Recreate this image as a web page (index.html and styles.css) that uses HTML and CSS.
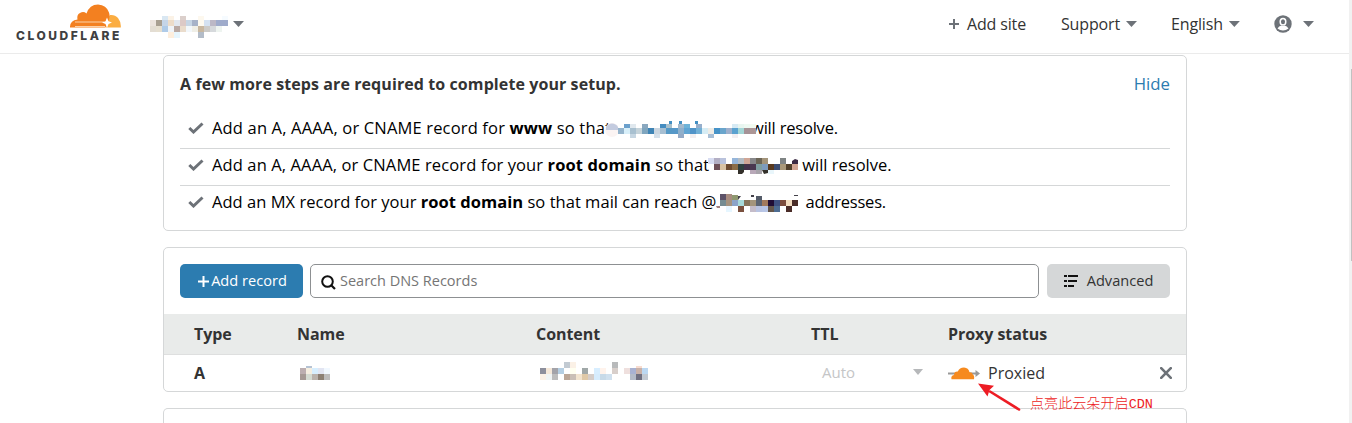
FILE: index.html
```html
<!DOCTYPE html>
<html lang="en">
<head>
<meta charset="utf-8">
<title>DNS | Cloudflare</title>
<link rel="stylesheet" href="styles.css">
</head>
<body>
<header class="topbar">
  <div class="brand">
    <svg class="brand-cloud" width="51" height="24" viewBox="0 0 51 24"><path fill="#fbad41" d="M36 23.500V17L40 11Q45 10.500 48 14Q51.200 18 50.800 23.500Z"/><path fill="#f38020" d="M0 23.500Q-.3 16.700 7.500 15.500Q6.600 10.500 10 9Q13.500 7 16.500 9.500Q19.500 .6 28 .5Q36.500 1 39 8.500Q40.500 13 38 18L35.500 23.500Z"/><path stroke="#fbd2a8" fill="none" d="M5 18H34M5 22.500H35"/><path fill="#fff" d="M37 13.500L38.500 17.200L42 18.500L38.500 20L37 24L35.500 20L32 18.500L35.500 17.200Z"/></svg>
    <span class="brand-name">CLOUDFLARE</span>
  </div>
  <div class="account">
    <svg class="mosaic" width="78" height="22" viewBox="0 0 78 22"><rect x="12" y="-2" fill="#d9e7f2"/><rect x="18" y="-2" fill="#fbf2e6"/><rect x="30" y="-2" fill="#dbcfcb"/><rect x="48" y="-2" fill="#fdf8ee"/><rect x="72" y="-2" fill="#f6fbff"/><rect x="0" y="4" fill="#ece4de"/><rect x="6" y="4" fill="#a89f91"/><rect x="12" y="4" fill="#c5d5e8"/><rect x="18" y="4" fill="#ecdcc9"/><rect x="24" y="4" fill="#e2e7ee"/><rect x="30" y="4" fill="#dcc9c6"/><rect x="36" y="4" fill="#c6d5e4"/><rect x="42" y="4" fill="#a6b2c8"/><rect x="48" y="4" fill="#fdfaf0"/><rect x="54" y="4" fill="#d4e2f2"/><rect x="60" y="4" fill="#bcb8c6"/><rect x="66" y="4" fill="#9fabcb"/><rect x="72" y="4" fill="#9fabcb"/><rect x="0" y="10" fill="#e3ddd3"/><rect x="6" y="10" fill="#e6dfd0"/><rect x="12" y="10" fill="#afcbe8"/><rect x="18" y="10" fill="#f0f4f8"/><rect x="24" y="10" fill="#b9a9a3"/><rect x="30" y="10" fill="#eadccc"/><rect x="36" y="10" fill="#f2f7fb"/><rect x="42" y="10" fill="#efeee6"/><rect x="48" y="10" fill="#c8b79f"/><rect x="54" y="10" fill="#cccbc8"/><rect x="60" y="10" fill="#d6d9dc"/><rect x="66" y="10" fill="#eef4f0"/><rect x="18" y="16" fill="#fdeedd"/><rect x="24" y="16" fill="#e6f5fd"/><rect x="48" y="16" fill="#b3bcc8"/></svg>
    <i class="caret"></i>
  </div>
  <nav class="menu">
    <a class="menu-item add-site"><svg width="10" height="10" viewBox="0 0 10 10"><path d="M5 0V10M0 5H10" stroke="#6d7278" stroke-width="2"/></svg><span>Add site</span></a>
    <a class="menu-item support"><span>Support</span><i class="caret"></i></a>
    <a class="menu-item language"><span>English</span><i class="caret"></i></a>
    <a class="menu-item user"><svg width="18" height="18" viewBox="0 0 18 18"><circle cx="9" cy="9" r="8.700" fill="#6d7278"/><ellipse cx="9" cy="6.700" rx="2.800" ry="3.300" fill="none" stroke="#fff" stroke-width="1.500"/><path d="M3.500 13.500Q5 11 7.300 10.500Q9 11.500 10.700 10.500Q13 11 14.500 13.500Q12 15.500 9 15.500Q6 15.500 3.500 13.500Z" fill="#fff"/></svg><i class="caret"></i></a>
  </nav>
</header>
<div class="scrollbar"><div class="thumb"></div></div>
<main class="content">
  <section class="card steps">
    <div class="steps-head"><h2>A few more steps are required to complete your setup.</h2><a class="hide">Hide</a></div>
    <ul class="step-list">
      <li><svg class="check" width="16" height="12" viewBox="0 0 16 12"><path d="M1.300 6L5.500 10L14.500 1.500" fill="none" stroke="#6d7278" stroke-width="3"/></svg><p><span class="t1">Add an A, AAAA, or CNAME record for <b>www</b> so that</span><svg class="mosaic m-www" width="152" height="18" viewBox="0 0 152 18"><circle cx="8" cy="9" r="7" fill="#fbf4f3"/><path d="M2 6A7 7 0 0 1 14 6V9H2Z" fill="#c3cbdf"/><path d="M65 0h3v3h-3zM75 0h3v3h-3zM91 0h3v3h-3z" fill="#428fc4"/><g class="short"><rect x="20" y="3" fill="#6ba0cc"/><rect x="26" y="3" fill="#e0e8ee"/><rect x="38" y="3" fill="#8aa8bf"/><rect x="56" y="3" fill="#448cc0"/><rect x="62" y="3" fill="#a9c0cc"/><rect x="74" y="3" fill="#a4b9cc"/><rect x="80" y="3" fill="#6eb3d8"/><rect x="92" y="3" fill="#96afcc"/><rect x="128" y="3" fill="#d6eaf4"/><rect x="134" y="3" fill="#e8f5f0"/><rect x="140" y="3" fill="#eef9f2"/><rect x="146" y="3" fill="#f2fbf2"/></g><rect x="14" y="7" fill="#94b4cc"/><rect x="20" y="7" fill="#d8eff9"/><rect x="26" y="7" fill="#a8c0d0"/><rect x="32" y="7" fill="#c5d3da"/><rect x="38" y="7" fill="#7fa5be"/><rect x="44" y="7" fill="#3f84b5"/><rect x="50" y="7" fill="#cbd6e0"/><rect x="56" y="7" fill="#a7bfd2"/><rect x="62" y="7" fill="#5599c6"/><rect x="68" y="7" fill="#5698c8"/><rect x="74" y="7" fill="#8fb0cc"/><rect x="80" y="7" fill="#60a5d4"/><rect x="86" y="7" fill="#5094c8"/><rect x="92" y="7" fill="#72b0d6"/><rect x="98" y="7" fill="#d6ecf4"/><rect x="104" y="7" fill="#efece6"/><rect x="110" y="7" fill="#4693c8"/><rect x="116" y="7" fill="#6aa5cc"/><rect x="122" y="7" fill="#9fb0cc"/><rect x="128" y="7" fill="#5aa2d0"/><rect x="134" y="7" fill="#a4d6d6"/><rect x="140" y="7" fill="#a59296"/><rect x="146" y="7" fill="#ac9696"/><g class="short"><rect x="26" y="13" fill="#c6d6e2"/><rect x="50" y="13" fill="#d5e0ea"/><rect x="74" y="13" fill="#94aac6"/><rect x="86" y="13" fill="#f2eff0"/><rect x="104" y="13" fill="#a8bfd6"/><rect x="128" y="13" fill="#f2eff2"/></g></svg><span class="tail-www">will resolve.</span></p></li>
      <li><svg class="check" width="16" height="12" viewBox="0 0 16 12"><path d="M1.300 6L5.500 10L14.500 1.500" fill="none" stroke="#6d7278" stroke-width="3"/></svg><p><span class="t2">Add an A, AAAA, or CNAME record for your <b>root domain</b> so that</span><svg class="mosaic m-root" width="90" height="16" viewBox="0 0 90 16"><rect x="0" y="0" fill="#d8ddf2"/><rect x="6" y="0" fill="#b3afc4"/><rect x="12" y="0" fill="#b9c2dc"/><rect x="24" y="0" fill="#96b6da"/><rect x="30" y="0" fill="#b4bcc4"/><rect x="36" y="0" fill="#cfa595"/><rect x="42" y="0" fill="#88888a"/><rect x="48" y="0" fill="#6c6556"/><rect x="54" y="0" fill="#a3947a"/><rect x="72" y="0" fill="#7f8484"/><path d="M84 3L87 1L90 2V6H84Z" fill="#3b2a44"/><rect x="6" y="6" fill="#6e5058"/><rect x="12" y="6" fill="#d9c2a2"/><rect x="18" y="6" fill="#6f4c31"/><rect x="24" y="6" fill="#8b6d47"/><rect x="30" y="6" fill="#2f403f"/><rect x="36" y="6" fill="#44324a"/><rect x="42" y="6" fill="#4a3850"/><rect x="48" y="6" fill="#7f9ea0"/><rect x="54" y="6" fill="#7d9bbe"/><rect x="60" y="6" fill="#5a3a1e"/><rect x="66" y="6" fill="#3c4c70"/><rect x="72" y="6" fill="#a99878"/><rect x="78" y="6" fill="#51402a"/><rect x="84" y="6" fill="#d1a594"/><path d="M30 12h6v2l-2 2h-4zM54 12h6v3l-4 1z" fill="#33302a"/><g class="short"><rect x="42" y="12" fill="#b8a8b8"/><rect x="48" y="12" fill="#a7a3aa"/><rect x="60" y="12" fill="#e9f6fb"/></g></svg><span>will resolve.</span></p></li>
      <li><svg class="check" width="16" height="12" viewBox="0 0 16 12"><path d="M1.300 6L5.500 10L14.500 1.500" fill="none" stroke="#6d7278" stroke-width="3"/></svg><p><span class="t3">Add an MX record for your <b>root domain</b> so that mail can reach @</span><svg class="mosaic m-mail" width="82" height="18" viewBox="-4 0 82 18"><path d="M-4 12h4v2h-3z" fill="#a08080"/><rect x="0" y="0" fill="#5d5268"/><rect x="6" y="0" fill="#a88c80"/><path d="M12 1h6v5h-6z" fill="#8f9870"/><path d="M18 2h3l-3 4zM31 1h3v2h-3zM74 1h4v1h-4z" fill="#44424a"/><path d="M36 2h6v4h-6z" fill="#545b68"/><rect x="0" y="6" fill="#758c92"/><rect x="6" y="6" fill="#a5937f"/><rect x="12" y="6" fill="#8ba3c8"/><rect x="18" y="6" fill="#a7dada"/><rect x="24" y="6" fill="#85745c"/><rect x="30" y="6" fill="#a4957c"/><rect x="36" y="6" fill="#5b6473"/><rect x="42" y="6" fill="#a27a5c"/><rect x="48" y="6" fill="#200e35"/><rect x="54" y="6" fill="#3e507f"/><rect x="60" y="6" fill="#7c4c3d"/><rect x="66" y="6" fill="#f2dcc0"/><rect x="72" y="6" fill="#4a2c28"/><rect x="6" y="12" fill="#e6f6ff"/><rect x="18" y="12" fill="#7a503e"/><rect x="30" y="12" fill="#c4bcc9"/><rect x="36" y="12" fill="#b8c3e2"/><rect x="42" y="12" fill="#b8c6e6"/><rect x="48" y="12" fill="#64564a"/><rect x="54" y="12" fill="#4e6d92"/><rect x="66" y="12" fill="#4a2c28"/></svg><span class="tail-mail">addresses.</span></p></li>
    </ul>
  </section>
  <section class="card records">
    <div class="toolbar">
      <button class="btn add"><svg width="11" height="11" viewBox="0 0 11 11"><path d="M5.500 0V11M0 5.500H11" stroke="#fff" stroke-width="2"/></svg><span>Add record</span></button>
      <div class="search"><svg width="15" height="15" viewBox="0 0 15 15"><circle cx="6.500" cy="6.500" r="5.300" fill="none" stroke="#111" stroke-width="2"/><path d="M10.200 10.200L14 14" stroke="#111" stroke-width="2.200"/></svg><span>Search DNS Records</span></div>
      <button class="btn advanced"><svg width="14" height="12" viewBox="0 0 14 12"><path fill="#111" d="M0 0h3v2H0zM4 0h10v2H4zM0 5h3v2H0zM4 5h9v2H4zM0 10h3v2H0zM4 10h6v2H4z"/></svg><span>Advanced</span></button>
    </div>
    <div class="row head"><span>Type</span><span>Name</span><span>Content</span><span>TTL</span><span>Proxy status</span></div>
    <div class="row">
      <b>A</b>
      <span class="cell-name"><svg class="mosaic" width="30" height="14" viewBox="0 0 30 14"><path d="M6 0h6v2h-6z" fill="#b6c3d4"/><rect x="0" y="2" fill="#bcaeb0"/><rect x="6" y="2" fill="#f5eee0"/><rect x="12" y="2" fill="#d7eefe"/><rect x="18" y="2" fill="#e2e5f2"/><rect x="24" y="2" fill="#f1f8ff"/><rect x="0" y="8" fill="#a59994"/><rect x="6" y="8" fill="#d5dbd2"/><rect x="12" y="8" fill="#bab2ac"/><rect x="18" y="8" fill="#8c8074"/><rect x="24" y="8" fill="#bdbcbc"/></svg></span>
      <span class="cell-content"><svg class="mosaic" width="108" height="18" viewBox="0 0 108 18"><rect x="24" y="0" fill="#c2cad2"/><rect x="30" y="0" fill="#fbf1e6"/><rect x="72" y="0" fill="#b8babb"/><path d="M96 4h6v2h-6z" fill="#f8dcd0"/><rect x="0" y="6" fill="#8d8f9c"/><rect x="6" y="6" fill="#f5e8d9"/><rect x="12" y="6" fill="#a3a3a9"/><rect x="18" y="6" fill="#b5cfe3"/><rect x="30" y="6" fill="#fffff0"/><rect x="42" y="6" fill="#a0a8a8"/><rect x="54" y="6" fill="#d8eeff"/><rect x="60" y="6" fill="#fff3ec"/><rect x="72" y="6" fill="#d8cfcb"/><rect x="84" y="6" fill="#efe0de"/><rect x="90" y="6" fill="#a9b2d2"/><rect x="96" y="6" fill="#c9b1a8"/><rect x="102" y="6" fill="#bcd8f2"/><rect x="0" y="12" fill="#fbf1e6"/><rect x="6" y="12" fill="#f0f4f4"/><rect x="12" y="12" fill="#bdbdbd"/><rect x="24" y="12" fill="#bba696"/><rect x="30" y="12" fill="#cabfb6"/><rect x="36" y="12" fill="#f2e4cf"/><rect x="42" y="12" fill="#dfc9a8"/><rect x="48" y="12" fill="#d5cdc9"/><rect x="54" y="12" fill="#d6ecfd"/><rect x="60" y="12" fill="#c8dae8"/><rect x="66" y="12" fill="#d0e0ee"/><rect x="90" y="12" fill="#b4bbc8"/><rect x="96" y="12" fill="#706f80"/><rect x="102" y="12" fill="#c2c9d2"/></svg></span>
      <span class="cell-ttl"><span>Auto</span><i class="caret pale"></i></span>
      <span class="cell-proxy"><svg width="32" height="13" viewBox="0 0 32 13"><path d="M0 6.500H28" stroke="#999" stroke-width="2"/><path d="M27.500 3L32 6.500L27.500 10Z" fill="#999"/><path fill="#f68a1f" d="M3.500 12.300Q2.500 8.800 6 8Q6.200 4.300 9.800 4.600Q11.500.5 16 .5Q20.500 .8 21.500 5.200Q24.600 5 24.600 7.200Q26.800 8.500 26 12.300Z"/></svg><span>Proxied</span></span>
      <svg class="remove" width="12" height="12" viewBox="0 0 12 12"><path d="M1.200 1.200L10.800 10.800M10.800 1.200L1.200 10.800" stroke="#6d7278" stroke-width="2.600" stroke-linecap="round"/></svg>
    </div>
  </section>
  <section class="card next"></section>
</main>
<div class="note">
  <svg width="43" height="29" viewBox="0 0 43 29"><path d="M41 26.500L12 8.500" stroke="#ed1c24" stroke-width="2.600" stroke-linecap="round"/><path d="M0 .5L16 2.800L11.500 7L9.500 13.500Z" fill="#ed1c24"/></svg>
  <span class="note-text">点亮此云朵开启<span class="note-latin">CDN</span></span>
</div>
</body>
</html>
```
FILE: styles.css
```css
* { box-sizing: border-box; }
body { margin: 0; height: 423px; overflow: hidden; background: #fff; color: #333; font: 16px/24px "Open Sans", "Noto Sans", sans-serif; }
svg { display: block; flex: none; }
h2, p, ul { margin: 0; padding: 0; }
.topbar { display: flex; height: 54px; width: 1349px; border-bottom: 1px solid #ebebeb; }
.brand { width: 134px; height: 53px; padding: 4px 0 0 16px; }
.brand-cloud { margin-left: 54px; }
.brand-name { display: block; margin-top: 1px; font: 800 12px/14px Inter, sans-serif; letter-spacing: 2.55px; color: #404041; }
.account { display: flex; align-items: flex-start; padding: 16px 0 0 16px; gap: 5px; }
.account .caret { margin-top: 5px; }
.mosaic rect { width: 6px; height: 6px; }
.mosaic .short rect { height: 4px; }
.caret { display: block; flex: none; width: 11px; height: 6px; background: #6d7278; clip-path: polygon(0 0, 100% 0, 50% 100%); }
.menu { display: flex; align-items: center; margin-left: auto; padding: 0 35px 5px 0; letter-spacing: -.15px; }
.menu-item { display: flex; align-items: center; }
.add-site { width: 112px; gap: 8px; }
.support { width: 110px; gap: 6px; }
.language { width: 103px; gap: 6px; }
.user { gap: 11px; }
.content { width: 1024px; margin: 1px 0 0 163px; display: flex; flex-direction: column; gap: 16px; }
.card { border: 1px solid #d5d7d8; border-radius: 5px; background: #fff; }
.steps { height: 176px; padding: 16px; }
.steps-head { display: flex; justify-content: space-between; }
.steps h2 { font-size: 16px; line-height: 24px; font-weight: 700; letter-spacing: .09px; }
.hide { color: #2c7cb0; font-size: 16.8px; }
.step-list { list-style: none; margin-top: 16px; color: #000; font-size: 16.5px; }
.step-list li { display: flex; align-items: center; height: 37px; padding: 0 0 4px 8px; gap: 8px; border-bottom: 1px solid #d5d7d8; }
.step-list li:last-child { border-bottom: 0; padding-bottom: 6px; }
.step-list p { display: flex; align-items: center; white-space: nowrap; }
.t1 { letter-spacing: .16px; }
.t2 { letter-spacing: .11px; }
.t3 { letter-spacing: .03px; }
.step-list .mosaic { z-index: 1; }
.m-www { margin: 3px -5px 0 -7px; }
.m-root { margin: 2px 4px 0 -1px; }
.m-mail { margin: 3px 7px 0 0; }
.tail-www, .tail-mail { letter-spacing: -.2px; }
.records { height: 145px; }
.toolbar { display: flex; height: 66px; padding: 16px 16px 0; }
.btn { display: flex; align-items: center; justify-content: center; width: 123px; height: 34px; padding: 0; border: 0; border-radius: 5px; font: 14.6px/24px "Open Sans", sans-serif; }
.btn span { padding-bottom: 2px; }
.add { background: #2c7cb0; color: #fff; gap: 2px; padding-left: 2px; }
.advanced { background: #d5d7d8; color: #333; gap: 9px; }
.search { display: flex; align-items: center; width: 729px; height: 34px; margin: 0 8px 0 7px; padding-left: 10px; gap: 4px; border: 1px solid #8d9092; border-radius: 5px; color: #757575; font-size: 14.5px; }
.search svg { margin-top: 2px; }
.row { display: grid; grid-template-columns: 103px 239px 275px 137px 212px 1fr; align-items: center; height: 36px; padding-left: 30px; }
.row.head { height: 41px; background: #e9ebea; border-bottom: 1px solid #dedfdf; font-weight: 700; letter-spacing: -.05px; }
.cell-name { padding: 0 0 0 3px; }
.cell-content { padding: 0 0 4px 4px; }
.cell-ttl { display: flex; align-items: center; justify-content: space-between; padding: 0 25px 2px 11px; color: #c5c6c7; font-size: 15px; }
.caret.pale { background: #b6b8ba; width: 10px; }
.cell-proxy { display: flex; align-items: center; gap: 8px; }
.next { height: 15px; border-bottom: 0; border-radius: 5px 5px 0 0; }
.scrollbar { position: absolute; right: 0; top: 0; width: 3px; height: 423px; padding-top: 69px; background: #f1f1f1; }
.thumb { width: 1px; height: 192px; margin-left: 2px; background: #c1c1c1; }
.note { position: absolute; left: 978px; top: 383px; display: flex; gap: 9px; color: #ed1c24; }
.note-text { height: 20px; margin-top: 9px; font: 300 14.1px/20px "Noto Sans CJK SC", sans-serif; white-space: nowrap; }
.note-latin { font: 13.5px/18px "Liberation Mono", monospace; }
```
